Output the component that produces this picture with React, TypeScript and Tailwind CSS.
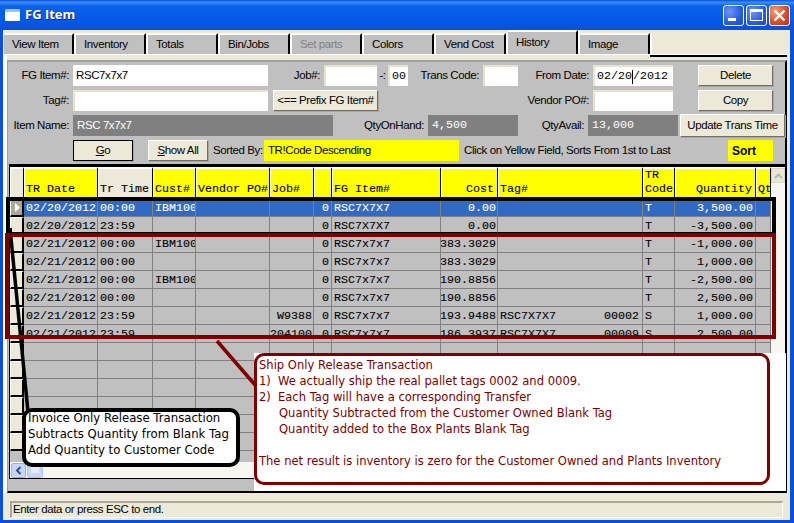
import React from "react";

const COLS = "grid grid-cols-[14px_74px_55px_43px_74px_44px_18px_109px_57px_145px_32px_81px_15px]";
const HOUSE = "font-['Liberation_Sans',sans-serif] text-[11.5px] tracking-[-0.4px] text-black";
const MONO = "font-['Liberation_Mono',monospace] text-[11.67px] tracking-normal";
const BTN = "flex items-center justify-center whitespace-nowrap bg-[#ece9d8] border border-t-white border-l-white border-r-[#716f64] border-b-[#716f64] h-[21px] shadow-[1px_1px_0_#aca899]";

const TABS = ["View Item", "Inventory", "Totals", "Bin/Jobs", "Set parts", "Colors", "Vend Cost", "History", "Image"];

const HEAD: { t: React.ReactNode; right?: boolean; plain?: boolean }[] = [
  { t: "TR Date" },
  { t: "Tr Time", plain: true },
  { t: "Cust#" },
  { t: "Vendor PO#" },
  { t: "Job#" },
  { t: "" },
  { t: "FG Item#" },
  { t: "Cost", right: true },
  { t: "Tag#" },
  { t: <>TR<br />Code</> },
  { t: "Quantity", right: true },
  { t: "Qt" },
];

const DATA = [
  ["02/20/2012", "00:00", "IBM100", "", "", "0", "RSC7X7X7", "0.00", "", "", "T", "3,500.00"],
  ["02/20/2012", "23:59", "", "", "", "0", "RSC7X7X7", "0.00", "", "", "T", "-3,500.00"],
  ["02/21/2012", "00:00", "IBM100", "", "", "0", "RSC7x7x7", "383.3029", "", "", "T", "-1,000.00"],
  ["02/21/2012", "00:00", "", "", "", "0", "RSC7x7x7", "383.3029", "", "", "T", "1,000.00"],
  ["02/21/2012", "00:00", "IBM100", "", "", "0", "RSC7x7x7", "190.8856", "", "", "T", "-2,500.00"],
  ["02/21/2012", "00:00", "", "", "", "0", "RSC7x7x7", "190.8856", "", "", "T", "2,500.00"],
  ["02/21/2012", "23:59", "", "", "W9388", "0", "RSC7x7x7", "193.9488", "RSC7X7X7", "00002", "S", "1,000.00"],
  ["02/21/2012", "23:59", "", "", "204100", "0", "RSC7x7x7", "186.3937", "RSC7X7X7", "00009", "S", "2,500.00"],
  ...Array.from({ length: 6 }, () => ["", "", "", "", "", "", "", "", "", "", "", ""]),
];

function Label({ w, children }: { w: number; children: React.ReactNode }) {
  return (
    <span className="text-right mr-1 whitespace-nowrap leading-[21px] shrink-0" style={{ width: w }}>
      {children}
    </span>
  );
}

function Input({ w, value, flat, mono }: { w: number; value?: React.ReactNode; flat?: boolean; mono?: boolean }) {
  return (
    <div
      className={`h-[21px] bg-white shrink-0 flex items-center whitespace-nowrap ${flat ? "pl-[3px]" : "pl-[2px] border-t-2 border-l-2 border-[#e6e2cf]"} ${mono ? MONO : ""}`}
      style={{ width: w }}
    >
      {value}
    </div>
  );
}

function Field({ w, value, mono }: { w: number; value: string; mono?: boolean }) {
  return (
    <div
      className={`h-[21px] bg-[#808080] text-white shrink-0 flex items-center pl-[4px] ${mono ? MONO : ""}`}
      style={{ width: w }}
    >
      {value}
    </div>
  );
}

function Tab({ label }: { label: string }) {
  const active = label === "History";
  const disabled = label === "Set parts";
  return (
    <div
      className={`w-[70px] mr-[2px] bg-[#c0c0c0] border-t-2 border-t-white border-r-2 border-r-black shadow-[2px_0_0_#fff] flex items-center pl-[8px] ${active ? "h-[24px] pb-[1px]" : "h-[21px]"} ${disabled ? "text-[#808080]" : ""}`}
    >
      {label}
    </div>
  );
}

function TitleButton({ kind }: { kind: "min" | "max" | "close" }) {
  const bg =
    kind === "close"
      ? "bg-[radial-gradient(circle_at_30%_30%,#f0a080,#d8502a_55%,#b83010)]"
      : "bg-[radial-gradient(circle_at_30%_30%,#6e96f0,#2a5ce0_60%,#2048c8)]";
  return (
    <div className={`w-[21px] h-[21px] rounded-[3px] border border-white flex items-center justify-center ${bg}`}>
      {kind === "min" && <div className="w-[8px] h-[3px] bg-white mt-[8px] -ml-[3px]" />}
      {kind === "max" && <div className="w-[13px] h-[12px] border border-white border-t-[3px]" />}
      {kind === "close" && (
        <svg width="13" height="13" viewBox="0 0 13 13">
          <path d="M1.5 1.5 L11.5 11.5 M11.5 1.5 L1.5 11.5" stroke="#fff" strokeWidth="2.4" />
        </svg>
      )}
    </div>
  );
}

function HeaderCell({ t, right, plain }: { t: React.ReactNode; right?: boolean; plain?: boolean }) {
  return (
    <div
      className={`h-[32px] border-t-2 border-l border-r border-b-2 border-t-white border-l-white border-r-black border-b-[#808080] flex items-end pb-[1px] px-[1px] leading-[14px] overflow-hidden whitespace-nowrap ${plain ? "bg-[#ece9d8]" : "bg-[#ffff00]"} ${right ? "justify-end pr-[3px]" : ""}`}
    >
      <span>{t}</span>
    </div>
  );
}

function Row({ cells, index }: { cells: string[]; index: number }) {
  const sel = index === 0;
  const c = `h-[18px] border-r border-b border-[#808080] flex items-end pb-[1px] leading-[13px] overflow-hidden whitespace-nowrap ${sel ? "bg-[#316ac5] text-white" : "bg-[#c0c0c0]"}`;
  return (
    <div className={COLS}>
      <div
        className={`h-[18px] border-t border-l border-t-white border-l-white border-r-2 border-b-2 border-r-black border-b-black flex items-center justify-center ${sel ? "bg-[#aca899]" : "bg-[#ece9d8]"}`}
      >
        {sel && (
          <svg width="6" height="9" viewBox="0 0 6 9">
            <path d="M1 0 L6 4.5 L1 9 Z" fill="#fff" />
          </svg>
        )}
      </div>
      <div className={`${c} pl-[2px]`}>{cells[0]}</div>
      <div className={`${c} pl-[2px]`}>{cells[1]}</div>
      <div className={`${c} pl-[2px]`}>{cells[2]}</div>
      <div className={c} />
      <div className={`${c} justify-end pr-[1px]`}>{cells[4]}</div>
      <div className={`${c} justify-end pr-[2px]`}>{cells[5]}</div>
      <div className={`${c} pl-[2px]`}>{cells[6]}</div>
      <div className={`${c} justify-end pr-[1px]`}>{cells[7]}</div>
      <div className={`${c} justify-between pl-[2px] pr-[3px]`}>
        <span>{cells[8]}</span>
        <span>{cells[9]}</span>
      </div>
      <div className={`${c} pl-[2px]`}>{cells[10]}</div>
      <div className={`${c} justify-end pr-[2px]`}>{cells[11]}</div>
      <div className={c} />
    </div>
  );
}

export default function App() {
  return (
    <div className={`relative w-[794px] h-[523px] overflow-hidden bg-[#0a4fe0] ${HOUSE}`}>
      {/* title bar */}
      <div className="h-[30px] flex items-center pl-[5px] pr-[4px] bg-[linear-gradient(180deg,#0a52d8_0%,#3a8cf8_8%,#0a62ec_20%,#0558e6_70%,#0a50d8_100%)]">
        <div className="w-[15px] h-[12px] bg-white rounded-[1px] border-t-[3px] border-[#9cc0f8]" />
        <span className="ml-[5px] text-white font-bold text-[13px] tracking-normal font-['Open_Sans',sans-serif] [text-shadow:1px_1px_0_#0a2a90]">FG Item</span>
        <div className="ml-auto flex gap-[2px]">
          <TitleButton kind="min" />
          <TitleButton kind="max" />
          <TitleButton kind="close" />
        </div>
      </div>

      {/* window body */}
      <div className="ml-[3px] mr-[4px] h-[490px] bg-[#ece9d8] flex flex-col">
        {/* tabs */}
        <div className="h-[24px] flex items-end pl-[1px] shrink-0">
          {TABS.map((t) => (
            <Tab key={t} label={t} />
          ))}
        </div>

        {/* tab page */}
        <div className="h-[439px] shrink-0 border-t border-l-[4px] border-t-white border-l-white flex flex-col relative">
          <div className="absolute top-0 left-[643px] right-[3px] h-[2px] bg-black" />
          <div className="mr-[3px] mt-[5px] flex-1 bg-[#c0c0c0] border-t-2 border-l border-[#a0a0a0] border-r-[2px] border-r-black border-b-2 border-b-black flex flex-col">
            {/* form */}
            <div className="pt-[3px] flex flex-col gap-1 shrink-0">
              <div className="flex h-[21px]">
                <Label w={61}>FG Item#:</Label>
                <Input w={195} value="RSC7x7x7" flat />
                <Label w={52}>Job#:</Label>
                <Input w={53} />
                <span className="w-[11px] text-center leading-[21px]">-:</span>
                <Input w={20} value="00" mono />
                <Label w={71}>Trans Code:</Label>
                <Input w={35} />
                <Label w={71}>From Date:</Label>
                <Input
                  w={80}
                  mono
                  value={
                    <>
                      02/20
                      <span className="inline-block w-px h-[14px] bg-black" />
                      /2012
                    </>
                  }
                />
                <div className={`${BTN} w-[75px] ml-[25px]`}>Delete</div>
              </div>
              <div className="flex h-[21px]">
                <Label w={61}>Tag#:</Label>
                <Input w={195} />
                <div className={`${BTN} w-[105px] ml-[5px]`}>&lt;== Prefix FG Item#</div>
                <Label w={211}>Vendor PO#:</Label>
                <Input w={80} />
                <div className={`${BTN} w-[75px] ml-[25px]`}>Copy</div>
              </div>
              <div className="flex h-[21px]">
                <Label w={61}>Item Name:</Label>
                <Field w={260} value="RSC 7x7x7" />
                <Label w={91}>QtyOnHand:</Label>
                <Field w={90} value="4,500" mono />
                <Label w={66}>QtyAvail:</Label>
                <Field w={90} value="13,000" mono />
                <div className={`${BTN} w-[105px] ml-[2px] !h-[23px] -mt-[1px]`}>Update Trans Time</div>
              </div>
              <div className="flex h-[21px] items-center">
                <div className={`${BTN} w-[60px] ml-[65px] !border-black`}>
                  <span><u>G</u>o</span>
                </div>
                <div className={`${BTN} w-[60px] ml-[15px]`}>
                  <span><u>S</u>how All</span>
                </div>
                <span className="w-[51px] ml-[5px] whitespace-nowrap">Sorted By:</span>
                <div className="w-[195px] h-[21px] bg-[#ffff00] flex items-center pl-[4px]">TR!Code Descending</div>
                <span className="w-[264px] ml-[5px] whitespace-nowrap">Click on Yellow Field, Sorts From 1st to Last</span>
                <div className="w-[45px] h-[21px] bg-[#ffff00] flex items-center pl-[4px] font-bold text-[12px] tracking-normal">Sort</div>
              </div>
            </div>

            {/* grid */}
            <div className={`mt-[3px] ml-[1px] h-[315px] border-t-[3px] border-l border-b border-black relative ${MONO} [-webkit-text-stroke:0.1px] bg-[#c0c0c0]`}>
              <div className={COLS}>
                <div className="h-[32px] bg-[#ece9d8] border-t-2 border-l border-r border-b-2 border-t-white border-l-white border-r-black border-b-[#808080]" />
                {HEAD.map((h, i) => (
                  <HeaderCell key={i} t={h.t} right={h.right} plain={h.plain} />
                ))}
              </div>
              {DATA.map((r, i) => (
                <Row key={i} cells={r} index={i} />
              ))}
              {/* vertical scrollbar */}
              <div className="absolute top-0 bottom-0 left-[761px] right-0 bg-[#f7f6f0] flex flex-col items-center pt-px">
                <div className="w-[14px] h-[15px] bg-[#e9e6d6] border border-[#d8d8c8] flex items-center justify-center">
                  <svg width="9" height="6" viewBox="0 0 9 6">
                    <path d="M1 5 L4.5 1.5 L8 5" fill="none" stroke="#b8b8a8" strokeWidth="1.8" />
                  </svg>
                </div>
              </div>
              {/* horizontal scrollbar */}
              <div className="absolute left-0 right-0 bottom-0 h-[16px] bg-[#f7f6f0] flex items-center pl-[1px] gap-[1px]">
                <div className="w-[15px] h-[15px] bg-[#c6d6fa] border border-[#9ab4ee] rounded-[2px] flex items-center justify-center">
                  <svg width="7" height="9" viewBox="0 0 7 9">
                    <path d="M5.5 1 L2 4.5 L5.5 8" fill="none" stroke="#33508c" strokeWidth="2" />
                  </svg>
                </div>
                <div className="w-[16px] h-[15px] bg-[#c6d6fa] border border-[#b0c4f4] rounded-[2px] flex items-center justify-center">
                  <svg width="8" height="6" viewBox="0 0 8 6">
                    <path d="M1 0V6M3 0V6M5 0V6M7 0V6" stroke="#fff" strokeWidth="1" />
                  </svg>
                </div>
              </div>
            </div>
          </div>
        </div>

        {/* status bar */}
        <div className="flex-1 px-[7px] pt-[8px]">
          <div className="h-[17px] border-t-2 border-l-2 border-[#aca899] border-r border-b border-r-white border-b-white flex items-center pl-[1px]">
            Enter data or press ESC to end.
          </div>
        </div>
      </div>

      {/* annotations lying over the grid */}
      <div className="absolute left-[6px] top-[197px] w-[770px] h-[39px] border-[4px] border-black" />
      <svg className="absolute left-0 top-0" width="794" height="523" viewBox="0 0 794 523">
        <path d="M10 228 L28 412" stroke="#000" strokeWidth="3.5" fill="none" />
        <path d="M217 341 L256 386" stroke="#800000" strokeWidth="3.5" fill="none" />
      </svg>
      <div className="absolute left-[5px] top-[233px] w-[771px] h-[106px] border-[4px] border-[#800000]" />

      <div className="absolute left-[254px] top-[353px] w-[532px] h-[138px] bg-white">
        <div className="w-[516px] h-[132px] border-[3px] border-[#800000] rounded-[10px] text-[#800000] pl-[2px] pt-[1px] font-['DejaVu_Sans',sans-serif] text-[11.55px] tracking-normal leading-[16px] whitespace-nowrap">
          <div>Ship Only Release Transaction</div>
          <div className="flex"><span className="w-[19px]">1)</span><span>We actually ship the real pallet tags 0002 and 0009.</span></div>
          <div className="flex"><span className="w-[19px]">2)</span><span>Each Tag will have a corresponding Transfer</span></div>
          <div className="pl-[20px]">Quantity Subtracted from the Customer Owned Blank Tag</div>
          <div className="pl-[20px]">Quantity added to the Box Plants Blank Tag</div>
          <div className="h-[16px]" />
          <div>The net result is inventory is zero for the Customer Owned and Plants Inventory</div>
        </div>
      </div>

      <div className="absolute left-[22px] top-[408px] w-[218px] h-[59px] bg-white border-[4px] border-black rounded-[10px] pl-[2px] font-['DejaVu_Sans',sans-serif] text-[11.7px] tracking-normal leading-[16px] text-black whitespace-nowrap">
        <div className="-mt-[2px]">Invoice Only Release Transaction</div>
        <div>Subtracts Quantity from Blank Tag</div>
        <div>Add Quantity to Customer Code</div>
      </div>
    </div>
  );
}
